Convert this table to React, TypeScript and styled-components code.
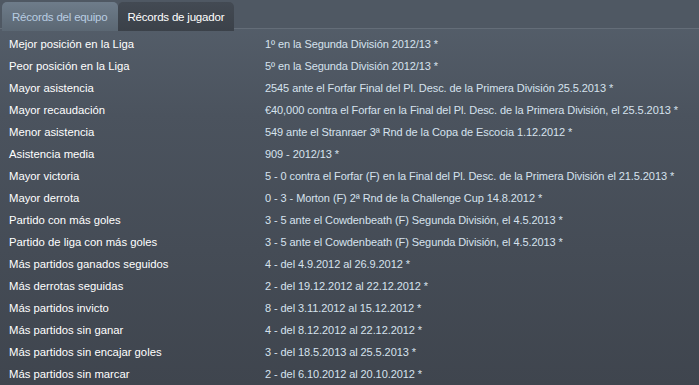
import React from "react";
import styled, { createGlobalStyle } from "styled-components";

const Global = createGlobalStyle`
  html, body { margin: 0; padding: 0; }
  body {
    width: 699px;
    height: 385px;
    overflow: hidden;
    font-family: "Liberation Sans", Arial, sans-serif;
  }
`;

const Page = styled.div`
  width: 699px;
  height: 385px;
  background: linear-gradient(180deg, #56606c 0%, #4b535e 30%, #3f454e 100%);
  display: flex;
  flex-direction: column;
  overflow: hidden;
`;

const TabBar = styled.div`
  display: flex;
  padding: 2px 0 0 2px;
  height: 29px;
  box-sizing: border-box;
  background: #4f5863;
  border-bottom: 1px solid #646d78;
`;

const Tab = styled.div<{ $active?: boolean }>`
  height: 29px;
  box-sizing: border-box;
  padding: 0 10px 0 10px;
  display: flex;
  align-items: center;
  font-size: 11.5px;
  letter-spacing: -0.2px;
  border-radius: 5px 5px 0 0;
  color: ${(p) => (p.$active ? "#b9cde2" : "#ffffff")};
  background: ${(p) =>
    p.$active
      ? "linear-gradient(180deg, #6e7c8a 0%, #5b6773 100%)"
      : "linear-gradient(180deg, #434a53 0%, #3b4149 100%)"};
`;

const List = styled.div`
  display: flex;
  flex-direction: column;
  padding-top: 4px;
`;

const Row = styled.div`
  display: grid;
  grid-template-columns: 256px 1fr;
  height: 22px;
  align-items: center;
  padding-left: 9px;
  font-size: 11px;
  letter-spacing: -0.08px;
  white-space: nowrap;
`;

const Label = styled.span`
  color: #ffffff;
  font-size: 11.3px;
  letter-spacing: 0;
`;

const Value = styled.span`
  color: #d6e2ee;
`;

const rows: [string, string][] = [
  ["Mejor posición en la Liga", "1º en la Segunda División 2012/13 *"],
  ["Peor posición en la Liga", "5º en la Segunda División 2012/13 *"],
  ["Mayor asistencia", "2545 ante el Forfar Final del Pl. Desc. de la Primera División 25.5.2013 *"],
  ["Mayor recaudación", "€40,000 contra el Forfar en la Final del Pl. Desc. de la Primera División, el 25.5.2013 *"],
  ["Menor asistencia", "549 ante el Stranraer 3ª Rnd de la Copa de Escocia 1.12.2012 *"],
  ["Asistencia media", "909 - 2012/13 *"],
  ["Mayor victoria", "5 - 0 contra el Forfar (F) en la Final del Pl. Desc. de la Primera División el 21.5.2013 *"],
  ["Mayor derrota", "0 - 3 - Morton (F) 2ª Rnd de la Challenge Cup 14.8.2012 *"],
  ["Partido con más goles", "3 - 5 ante el Cowdenbeath (F) Segunda División, el 4.5.2013 *"],
  ["Partido de liga con más goles", "3 - 5 ante el Cowdenbeath (F) Segunda División, el 4.5.2013 *"],
  ["Más partidos ganados seguidos", "4 - del 4.9.2012 al 26.9.2012 *"],
  ["Más derrotas seguidas", "2 - del 19.12.2012 al 22.12.2012 *"],
  ["Más partidos invicto", "8 - del 3.11.2012 al 15.12.2012 *"],
  ["Más partidos sin ganar", "4 - del 8.12.2012 al 22.12.2012 *"],
  ["Más partidos sin encajar goles", "3 - del 18.5.2013 al 25.5.2013 *"],
  ["Más partidos sin marcar", "2 - del 6.10.2012 al 20.10.2012 *"],
];

export default function App() {
  return (
    <>
      <Global />
      <Page>
        <TabBar>
          <Tab $active>Récords del equipo</Tab>
          <Tab>Récords de jugador</Tab>
        </TabBar>
        <List>
          {rows.map(([l, v]) => (
            <Row key={l}>
              <Label>{l}</Label>
              <Value>{v}</Value>
            </Row>
          ))}
        </List>
      </Page>
    </>
  );
}
